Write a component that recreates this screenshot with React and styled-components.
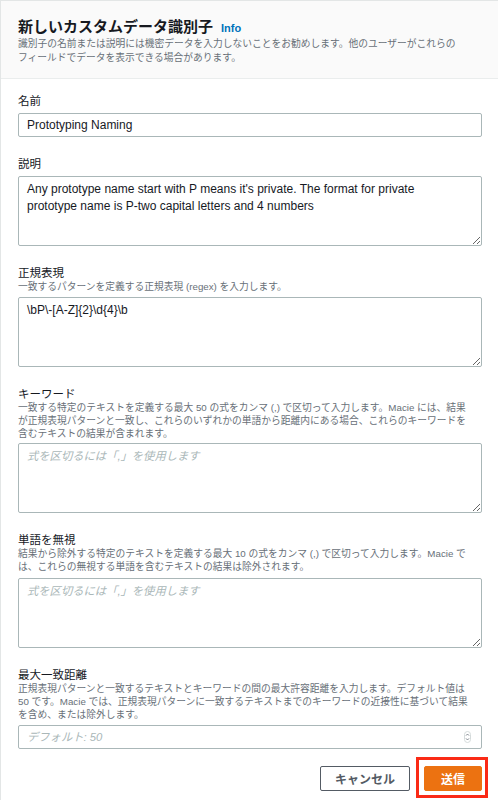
import React from "react";
import styled, { createGlobalStyle } from "styled-components";

const GlobalStyle = createGlobalStyle`
  html, body {
    margin: 0;
    padding: 0;
    background: #ffffff;
  }
  body {
    font-family: "Liberation Sans", "Noto Sans CJK JP", sans-serif;
    color: #16191f;
  }
`;

const FONT = `"Liberation Sans", "Noto Sans CJK JP", sans-serif`;

const Panel = styled.div`
  width: 498px;
  height: 800px;
  box-sizing: border-box;
  border-left: 1px solid #e3e6e6;
  border-top: 1px solid #e3e6e6;
  background: #ffffff;
  overflow: hidden;
`;

const Header = styled.header`
  background: #fafafa;
  border-bottom: 1px solid #eaeded;
  padding: 16px 16px 13px 17px;
`;

const TitleRow = styled.div`
  display: flex;
  align-items: baseline;
  height: 20px;
  line-height: 20px;
`;

const Title = styled.h2`
  margin: 0;
  font-size: 15px;
  font-weight: 700;
  color: #16191f;
`;

const InfoLink = styled.a`
  margin-left: 8px;
  font-size: 11px;
  font-weight: 700;
  color: #0073bb;
  text-decoration: none;
`;

const HeaderLine = styled.div`
  height: 14px;
  line-height: 14px;
  font-size: 9.75px;
  color: #687078;
  white-space: nowrap;
`;

const Body = styled.div`
  padding: 15px 16px 0 17px;
`;

const Field = styled.div`
  display: flex;
  flex-direction: column;
  & + & {
    margin-top: ${(p) => p.$gap || 19}px;
  }
`;

const Label = styled.label`
  display: block;
  height: 14px;
  font-size: 11.5px;
  line-height: 14px;
  color: #16191f;
  margin-bottom: ${(p) => (p.$withHint ? 0 : 5)}px;
`;

const Hint = styled.div`
  margin-bottom: ${(p) => p.$mb || 4}px;
`;

const HintLine = styled.div`
  height: ${(p) => p.$lh || 13}px;
  line-height: ${(p) => p.$lh || 13}px;
  font-size: 9.75px;
  color: #687078;
  white-space: nowrap;
`;

const controlBase = `
  box-sizing: border-box;
  width: 100%;
  border: 1px solid #aab7b8;
  border-radius: 2px;
  background: #ffffff;
  font-family: ${FONT};
  font-size: 12px;
  line-height: 17px;
  color: #16191f;
  outline: none;
`;

const TextInput = styled.input`
  ${controlBase}
  display: block;
  height: 24px;
  padding: 3px 8px;
`;

const TextArea = styled.textarea`
  ${controlBase}
  display: block;
  height: 70px;
  padding: 4px 22px 4px 8px;
  resize: vertical;
  &::placeholder {
    color: #aab7b8;
    font-style: italic;
    font-size: 11.3px;
  }
`;

const NumberWrap = styled.div`
  ${controlBase}
  display: flex;
  align-items: center;
  height: 24px;
  padding: 0 10px 0 8px;
`;

const NumberField = styled.input`
  flex: 1;
  border: none;
  outline: none;
  padding: 0;
  background: transparent;
  font-family: ${FONT};
  font-size: 12px;
  &::placeholder {
    color: #aab7b8;
    font-style: italic;
    font-size: 11.3px;
  }
`;

const Spinner = styled.svg`
  flex: none;
  width: 7px;
  height: 12px;
`;

const Actions = styled.div`
  display: flex;
  justify-content: flex-end;
  align-items: flex-start;
  margin-top: 17px;
`;

const Button = styled.button`
  height: 25px;
  box-sizing: border-box;
  padding: 0 ${(p) => p.$pad || 14}px;
  border-radius: 2px;
  font-family: ${FONT};
  font-size: 12px;
  font-weight: 700;
  cursor: pointer;
`;

const CancelButton = styled(Button)`
  background: #ffffff;
  border: 1px solid #545b64;
  color: #545b64;
`;

const SubmitButton = styled(Button)`
  display: block;
  background: #ec7211;
  border: 1px solid #ec7211;
  color: #ffffff;
`;

const Highlight = styled.div`
  border: 3px solid #fa2a16;
  padding: 6px 3px 4px 5px;
  margin: -9px -6px 0 6px;
`;

const fields = [
  {
    label: "説明",
    value:
      "Any prototype name start with P means it's private. The format for private prototype name is P-two capital letters and 4 numbers",
    gap: 18,
  },
  {
    label: "正規表現",
    hint: ["一致するパターンを定義する正規表現 (regex) を入力します。"],
    hintLh: 14,
    hintMb: 3,
    value: "\\bP\\-[A-Z]{2}\\d{4}\\b",
    gap: 20,
  },
  {
    label: "キーワード",
    hint: [
      "一致する特定のテキストを定義する最大 50 の式をカンマ (,) で区切って入力します。Macie には、結果",
      "が正規表現パターンと一致し、これらのいずれかの単語から距離内にある場合、これらのキーワードを",
      "含むテキストの結果が含まれます。",
    ],
    hintMb: 3,
    placeholder: "式を区切るには「,」を使用します",
    gap: 20,
  },
  {
    label: "単語を無視",
    hint: [
      "結果から除外する特定のテキストを定義する最大 10 の式をカンマ (,) で区切って入力します。Macie で",
      "は、これらの無視する単語を含むテキストの結果は除外されます。",
    ],
    hintMb: 5,
    placeholder: "式を区切るには「,」を使用します",
    gap: 19,
  },
];

const HintLines = ({ lines, lh, mb }) => (
  <Hint $mb={mb}>
    {lines.map((line, i) => (
      <HintLine key={i} $lh={lh}>
        {line}
      </HintLine>
    ))}
  </Hint>
);

const App = () => {
  return (
    <>
      <GlobalStyle />
      <Panel>
        <Header>
          <TitleRow>
            <Title>新しいカスタムデータ識別子</Title>
            <InfoLink href="#">Info</InfoLink>
          </TitleRow>
          <HeaderLine>
            識別子の名前または説明には機密データを入力しないことをお勧めします。他のユーザーがこれらの
          </HeaderLine>
          <HeaderLine>フィールドでデータを表示できる場合があります。</HeaderLine>
        </Header>

        <Body>
          <Field>
            <Label>名前</Label>
            <TextInput defaultValue="Prototyping Naming" />
          </Field>

          {fields.map((f) => (
            <Field key={f.label} $gap={f.gap}>
              <Label $withHint={!!f.hint}>{f.label}</Label>
              {f.hint && <HintLines lines={f.hint} lh={f.hintLh} mb={f.hintMb} />}
              <TextArea
                defaultValue={f.value}
                placeholder={f.placeholder}
                spellCheck={false}
              />
            </Field>
          ))}

          <Field $gap={19}>
            <Label $withHint>最大一致距離</Label>
            <HintLines
              mb={4}
              lines={[
                "正規表現パターンと一致するテキストとキーワードの間の最大許容距離を入力します。デフォルト値は",
                "50 です。Macie では、正規表現パターンに一致するテキストまでのキーワードの近接性に基づいて結果",
                "を含め、または除外します。",
              ]}
            />
            <NumberWrap>
              <NumberField placeholder="デフォルト: 50" />
              <Spinner viewBox="0 0 7 12">
                <rect x="0.5" y="0.5" width="6" height="11" rx="3" fill="none" stroke="#d5dbdb" />
                <path d="M2 4.6 L3.5 3 L5 4.6" fill="none" stroke="#687078" strokeWidth="0.8" />
                <path d="M2 7.4 L3.5 9 L5 7.4" fill="none" stroke="#687078" strokeWidth="0.8" />
              </Spinner>
            </NumberWrap>
          </Field>

          <Actions>
            <CancelButton $pad={14}>キャンセル</CancelButton>
            <Highlight>
              <SubmitButton $pad={16}>送信</SubmitButton>
            </Highlight>
          </Actions>
        </Body>
      </Panel>
    </>
  );
};

export default App;
